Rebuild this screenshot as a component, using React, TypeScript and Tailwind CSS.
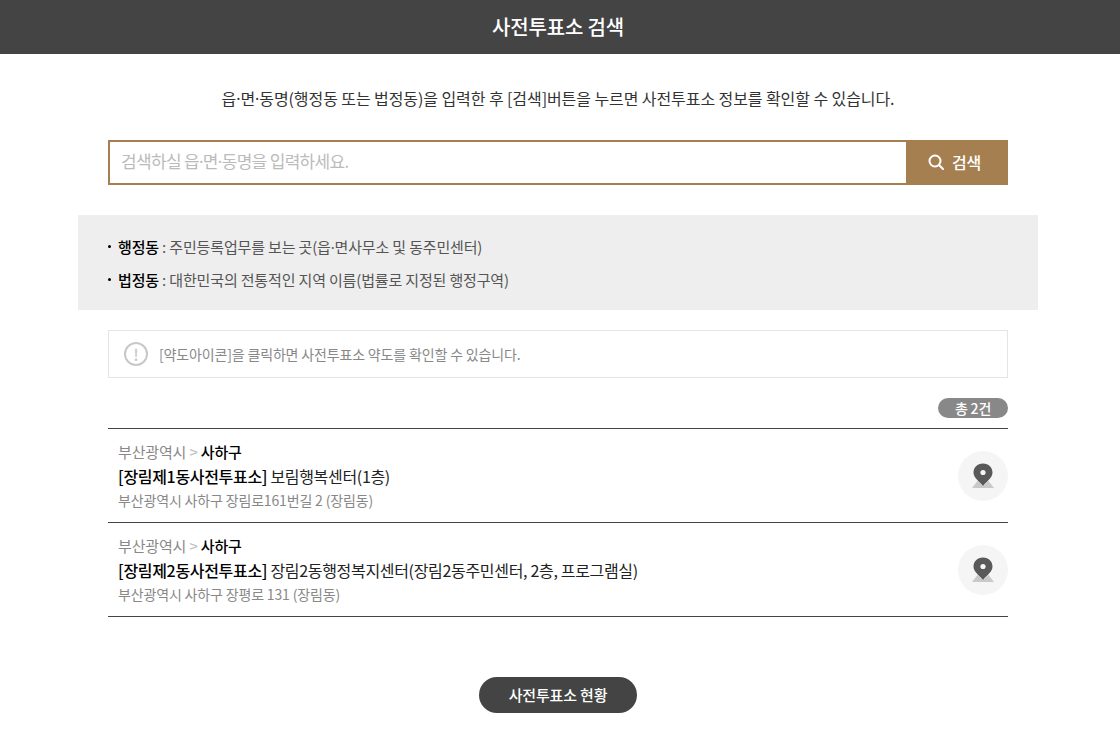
import React from "react";

const Dot = () => <span className="font-['Noto_Sans']">·</span>;

function Pin() {
  return (
    <svg width="24" height="26" viewBox="0 0 24 26" aria-hidden="true">
      <path d="M6.5 18 L1 25 H23 L17.5 18 L12 23 Z" fill="#c9c9c9" />
      <path d="M12 0.5 C6.2 0.5 2.5 4.6 2.5 9.6 C2.5 15 8.5 18.6 12 23 C15.5 18.6 21.5 15 21.5 9.6 C21.5 4.6 17.8 0.5 12 0.5 Z" fill="#595959" />
      <circle cx="12" cy="9.5" r="2.6" fill="#f5f5f5" />
    </svg>
  );
}

function Row({ name, rest, addr }: { name: string; rest: string; addr: string }) {
  return (
    <div className="flex items-center justify-between h-[94px] border-b border-[#444444] pl-[10px]">
      <div className="flex flex-col">
        <div className="text-[15px] leading-[24px] text-[#888888] h-[24px]">
          부산광역시 <span className="text-[#bbbbbb]">&gt;</span> <span className="text-black font-medium">사하구</span>
        </div>
        <div className="text-[16px] leading-[24px] text-[#222222] tracking-[-0.02em]">
          <span className="font-medium text-black">{name}</span> {rest}
        </div>
        <div className="text-[14px] leading-[24px] text-[#888888]">{addr}</div>
      </div>
      <div className="w-[50px] h-[50px] rounded-full bg-[#f5f5f5] flex items-center justify-center">
        <Pin />
      </div>
    </div>
  );
}

export default function App() {
  return (
    <div className="w-[1120px] h-[737px] bg-white overflow-hidden font-['Noto_Sans_CJK_KR','Noto_Sans',sans-serif] tracking-[-0.01em]">
      <header className="h-[54px] bg-[#444444] flex items-center justify-center pr-[4px] text-white text-[20px] font-medium">
        사전투표소 검색
      </header>
      <main className="w-[960px] ml-[78px]">
        <p className="mt-[32px] h-[24px] text-center text-[16px] leading-[24px] text-[#333333] tracking-[-0.005em]">
          읍<Dot />면<Dot />동명(행정동 또는 법정동)을 입력한 후 [검색]버튼을 누르면 사전투표소 정보를 확인할 수 있습니다.
        </p>
        <div className="mx-[30px] mt-[30px] h-[45px] flex">
          <div className="flex-1 border-2 border-[#a67f51] border-r-0 flex items-center pl-[11px] pb-[2px] text-[17px] text-[#bbbbbb] tracking-[-0.04em]">
            <span>검색하실 읍<Dot />면<Dot />동명을 입력하세요.</span>
          </div>
          <button className="w-[102px] bg-[#a67f51] flex items-center justify-center gap-[8px] pr-[5px] pb-[2px] text-white text-[16px] font-medium">
            <svg width="16" height="16" viewBox="0 0 16 16" fill="none" stroke="white" strokeWidth="2" aria-hidden="true">
              <circle cx="7" cy="7" r="5.5" />
              <path d="M11 11 L15 15" strokeLinecap="round" />
            </svg>
            검색
          </button>
        </div>
        <section className="mt-[30px] h-[95px] bg-[#eeeeee] px-[30px] pt-[15px] text-[15px] leading-[33px] text-[#555555]">
          <div className="flex items-center h-[33px]">
            <span className="w-[3px] h-[3px] rounded-full bg-black mr-[7px]" />
            <span><b className="font-medium text-black">행정동</b> : 주민등록업무를 보는 곳(읍<Dot />면사무소 및 동주민센터)</span>
          </div>
          <div className="flex items-center h-[33px]">
            <span className="w-[3px] h-[3px] rounded-full bg-black mr-[7px]" />
            <span><b className="font-medium text-black">법정동</b> : 대한민국의 전통적인 지역 이름(법률로 지정된 행정구역)</span>
          </div>
        </section>
        <div className="mx-[30px] mt-[20px]">
          <div className="h-[48px] border border-[#e5e5e5] flex items-center pl-[15px] text-[14px] text-[#888888]">
            <span className="w-[24px] h-[24px] rounded-full border-2 border-[#c8c8c8] flex items-center justify-center text-[#c8c8c8] text-[16px] font-medium leading-none mr-[11px]">!</span>
            [약도아이콘]을 클릭하면 사전투표소 약도를 확인할 수 있습니다.
          </div>
          <div className="mt-[20px] flex justify-end">
            <span className="w-[70px] h-[20px] rounded-full bg-[#888888] text-white text-[14px] font-medium leading-[20px] text-center">총 2건</span>
          </div>
          <div className="mt-[10px] border-t border-[#444444]">
            <Row name="[장림제1동사전투표소]" rest="보림행복센터(1층)" addr="부산광역시 사하구 장림로161번길 2 (장림동)" />
            <Row name="[장림제2동사전투표소]" rest="장림2동행정복지센터(장림2동주민센터, 2층, 프로그램실)" addr="부산광역시 사하구 장평로 131 (장림동)" />
          </div>
          <div className="mt-[60px] flex justify-center">
            <button className="w-[158px] h-[36px] rounded-full bg-[#444444] text-white text-[15px] font-medium">사전투표소 현황</button>
          </div>
        </div>
      </main>
    </div>
  );
}
